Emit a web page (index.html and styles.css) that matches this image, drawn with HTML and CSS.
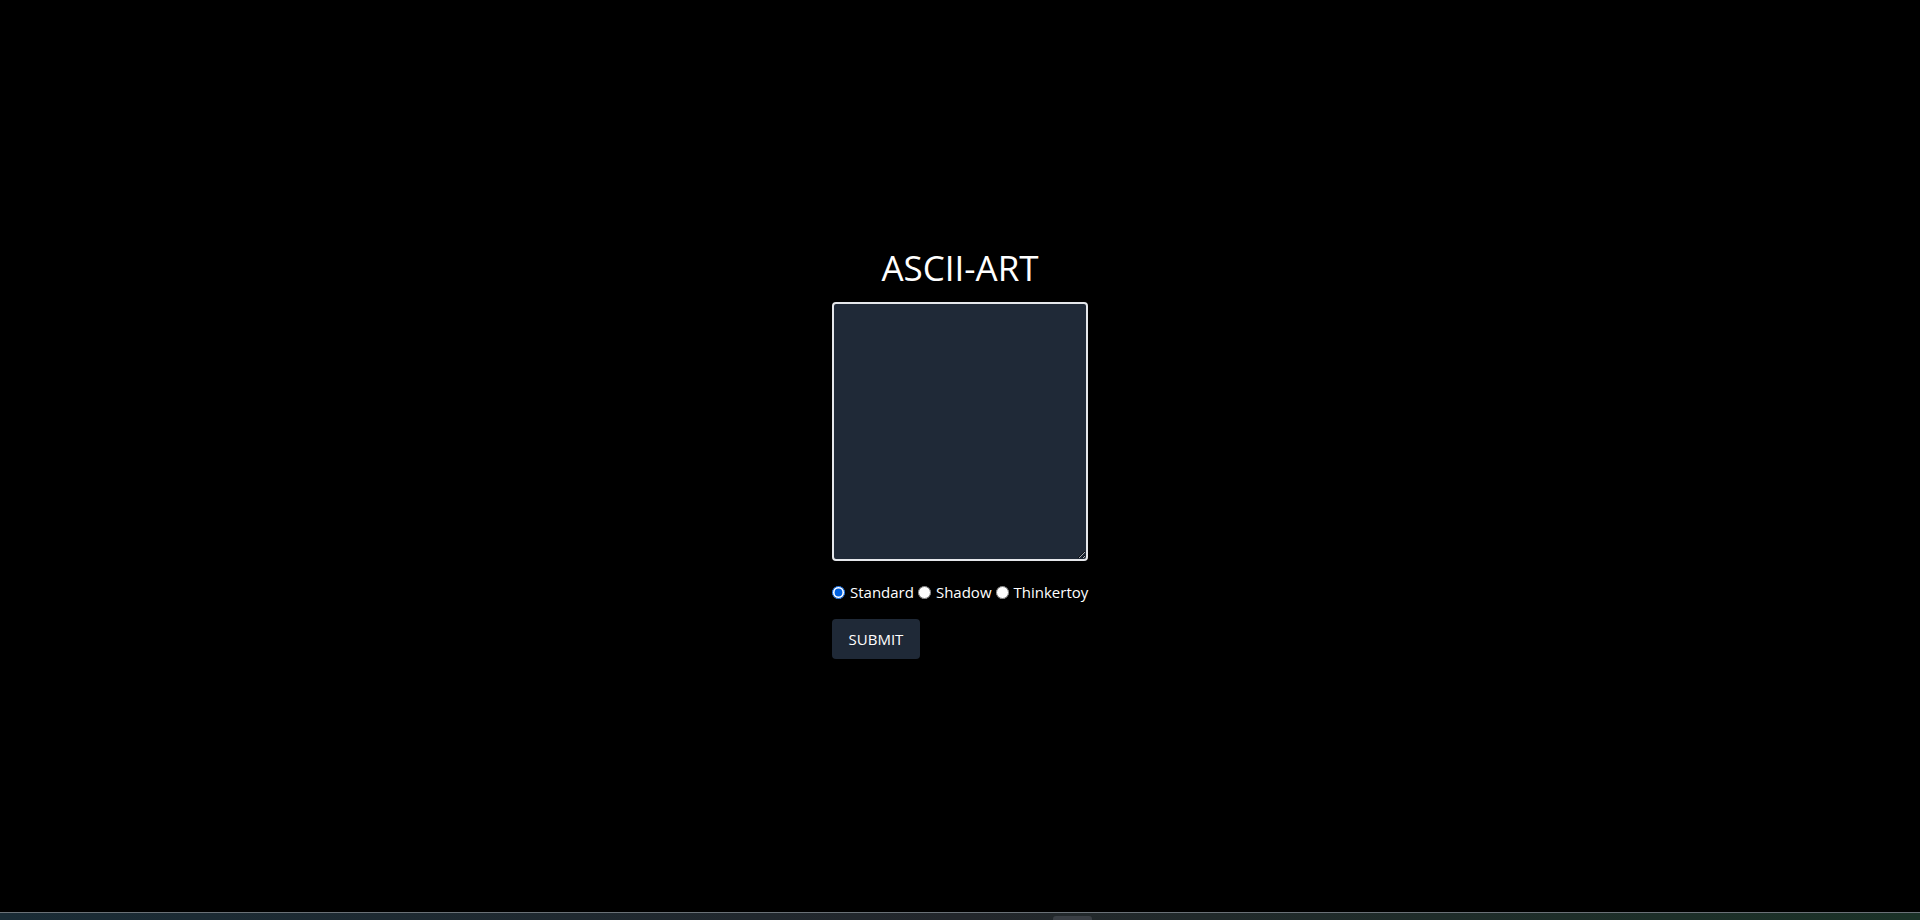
FILE: index.html
```html
<!DOCTYPE html>
<html lang="en">
<head>
<meta charset="utf-8">
<title>ASCII-ART</title>
<link rel="stylesheet" href="styles.css">
</head>
<body>
<main class="page">
  <form class="card">
    <h1 class="title">ASCII-ART</h1>
    <textarea class="input" name="text"></textarea>
    <div class="banners">
      <label class="opt"><input type="radio" name="banner" value="standard" checked> Standard</label>
      <label class="opt"><input type="radio" name="banner" value="shadow"> Shadow</label>
      <label class="opt"><input type="radio" name="banner" value="thinkertoy"> Thinkertoy</label>
    </div>
    <button type="button" class="submit">SUBMIT</button>
  </form>
</main>
<div class="taskbar"><span class="tab"></span></div>
</body>
</html>
```
FILE: styles.css
```css
html, body {
  margin: 0;
  padding: 0;
  height: 100%;
}
body {
  background: #000;
  color: #fff;
  font-family: "Open Sans", "Noto Sans", sans-serif;
  display: flex;
  flex-direction: column;
}
.page {
  flex: 1;
  display: flex;
  align-items: center;
  justify-content: center;
}
.card {
  display: flex;
  flex-direction: column;
  align-items: flex-start;
  width: 256px;
  margin-top: -4px;
}
.title {
  align-self: center;
  font-size: 35px;
  font-weight: 400;
  line-height: 44px;
  margin: -3px 0 12px 0;
}
.input {
  box-sizing: border-box;
  width: 256px;
  height: 259px;
  background: #1f2937;
  border: 2px solid #e5e7eb;
  border-radius: 4px;
  color: #fff;
  padding: 8px;
  margin: 0;
  outline: none;
}
.banners {
  display: flex;
  align-items: center;
  margin-top: 20px;
  font-size: 15px;
  line-height: 22px;
}
.opt {
  display: flex;
  align-items: center;
  margin-right: 4px;
}
.opt input {
  margin: 0 5px 0 0;
  width: 13px;
  height: 13px;
  accent-color: #0060df;
}
.submit {
  margin-top: 16px;
  width: 88px;
  height: 40px;
  background: #1f2937;
  color: #fff;
  border: none;
  border-radius: 4px;
  font-family: inherit;
  font-size: 15px;
  padding: 0;
}
.taskbar {
  height: 8px;
  flex: none;
  box-sizing: border-box;
  border-top: 1px solid #6b7278;
  background: linear-gradient(90deg, #1a2c36 0%, #23272c 50%, #1b3228 100%);
  position: relative;
}
.tab {
  position: absolute;
  left: 1053px;
  top: 3px;
  width: 39px;
  height: 5px;
  border-radius: 3px 3px 0 0;
  background: #3a3f45;
}
```
